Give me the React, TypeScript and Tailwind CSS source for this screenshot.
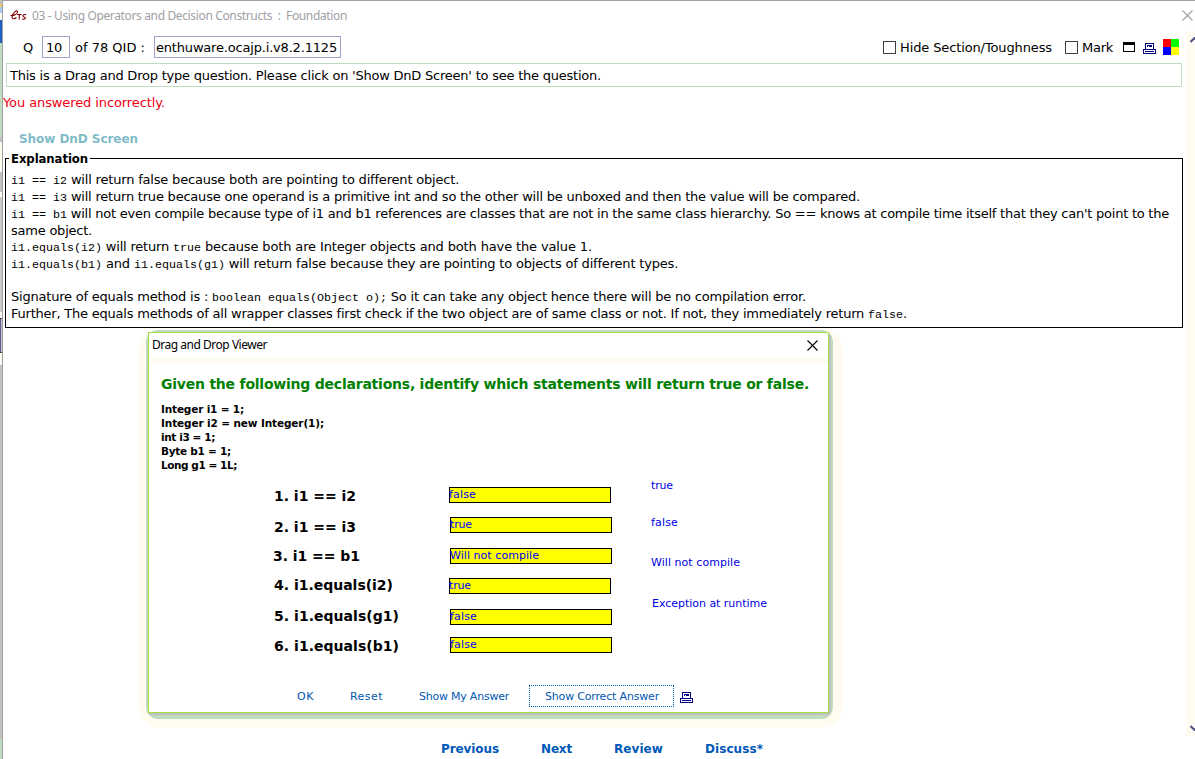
import { useLayoutEffect, useRef, type ReactNode } from "react";

// Spreads or tightens the letters of a label so that it fills a given width.
function Fit({ w, className = "", children }: { w: number; className?: string; children: ReactNode }) {
  const ref = useRef<HTMLSpanElement>(null);
  useLayoutEffect(() => {
    const el = ref.current;
    if (!el) return;
    el.style.letterSpacing = "0px";
    const n = (el.textContent ?? "").length;
    el.style.letterSpacing = `${(w - el.getBoundingClientRect().width) / n}px`;
  }, [w]);
  return (
    <span ref={ref} className={`inline-block shrink-0 whitespace-pre ${className}`}>
      {children}
    </span>
  );
}

function Code({ children }: { children: ReactNode }) {
  return <span className="-mb-px mt-px shrink-0 whitespace-pre font-['Liberation_Mono',monospace] text-[11.667px] tracking-normal">{children}</span>;
}

function Printer() {
  return (
    <svg width="13" height="11" viewBox="0 0 13 11" shapeRendering="crispEdges" className="shrink-0 text-[#000080]">
      <path fill="currentColor" d="M2 0h9v7h-9z M0 6h13v5h-13z" />
      <path fill="#fff" d="M3 1h7v5h-7z M1 7h11v3h-11z" />
      <path fill="currentColor" d="M4 2h5v1h-5z M4 3h1v1h-1z M6 3h3v1h-3z M2 8h9v1h-9z" />
    </svg>
  );
}

function Cross({ size, className }: { size: number; className: string }) {
  return (
    <svg width={size} height={size} viewBox="0 0 11 11" className={className}>
      <path d="M.5 .5l10 10M10.5 .5l-10 10" stroke="currentColor" strokeWidth="1.1" />
    </svg>
  );
}

const statements = [
  { text: "1. i1 == i2", w: 82, cls: "h-[31px]" },
  { text: "2. i1 == i3", w: 82, cls: "h-[29px]" },
  { text: "3. i1 == b1", w: 87, cls: "h-[29px] -ml-px" },
  { text: "4. i1.equals(i2)", w: 119, cls: "h-[31px]" },
  { text: "5. i1.equals(g1)", w: 125, cls: "h-[30px]" },
  { text: "6. i1.equals(b1)", w: 125, cls: "h-[30px]" },
];

const answers = [
  { text: "false", w: 27, cls: "mb-[14px]" },
  { text: "true", w: 22, cls: "ml-px mb-[15px]" },
  { text: "Will not compile", w: 89, cls: "ml-px mb-[14px]" },
  { text: "true", w: 22, cls: "mb-[15px]" },
  { text: "false", w: 27, cls: "ml-px mb-[12px]" },
  { text: "false", w: 27, cls: "ml-px" },
];

const options = [
  { text: "true", w: 22, cls: "h-[37px]" },
  { text: "false", w: 27, cls: "h-[40px]" },
  { text: "Will not compile", w: 89, cls: "h-[41px]" },
  { text: "Exception at runtime", w: 115, cls: "ml-px h-[20px]" },
];

function Dialog() {
  return (
    <div className="absolute left-[139px] top-[329px] h-[399px] w-[704px] rounded-[22px] bg-[#fffbf0]">
      <div className="absolute left-[7px] top-px h-[389px] w-[687px] rounded-[12px] bg-[#c0dcc0]" />
      <div className="absolute left-[9px] top-[5px] h-[381px] w-[683px] rounded-[4px] bg-[#c0c0c0]" />
      <div className="absolute left-[9px] top-[3px] flex h-[381px] w-[681px] flex-col border border-[#a0e040] bg-white">
        <div className="flex h-[25px] items-center justify-between pb-px pl-[3px] pr-[10px] font-['Noto_Sans',sans-serif] text-[12px]">
          <Fit w={115}>Drag and Drop Viewer</Fit>
          <Cross size={11} className="text-black" />
        </div>
        <div className="h-[5px] bg-[#fffbf0]" />
        <div className="flex flex-1 flex-col">
          <Fit w={648} className="ml-[12px] mt-[11px] h-[20px] self-start text-[14px] font-bold leading-[20px] text-[#008000]">
            Given the following declarations, identify which statements will return true or false.
          </Fit>
          <div className="mb-px ml-[12px] mt-[8px] flex flex-col items-start text-[10.5px] font-bold leading-[14px]">
            <Fit w={83}>Integer i1 = 1;</Fit>
            <Fit w={163}>Integer i2 = new Integer(1);</Fit>
            <Fit w={54}>int i3 = 1;</Fit>
            <Fit w={70}>Byte b1 = 1;</Fit>
            <Fit w={76}>Long g1 = 1L;</Fit>
          </div>
          <div className="flex h-[200px]">
            <div className="ml-[125px] mt-[13px] w-[175px] text-[14px] font-bold leading-[20px]">
              {statements.map((s) => (
                <div key={s.text} className={s.cls}>
                  <Fit w={s.w}>{s.text}</Fit>
                </div>
              ))}
            </div>
            <div className="mt-[14px] w-[202px] text-[11px] text-[#0000ff]">
              {answers.map((a, i) => (
                <div key={i} className={`flex h-[16px] w-[162px] items-center border border-black bg-[#ffff00] pb-px leading-[14px] ${a.cls}`}>
                  <Fit w={a.w} className="-ml-px">{a.text}</Fit>
                </div>
              ))}
            </div>
            <div className="mt-[3px] text-[11px] leading-[20px] text-[#0000e0]">
              {options.map((o) => (
                <div key={o.text} className={o.cls}>
                  <Fit w={o.w}>{o.text}</Fit>
                </div>
              ))}
            </div>
          </div>
          <div className="mt-[12px] flex h-[22px] items-center pl-[148px] text-[11px] text-[#0057b0]">
            <Fit w={17} className="mr-[36px] mt-[2px]">OK</Fit>
            <Fit w={33} className="mr-[36px] mt-[2px]">Reset</Fit>
            <Fit w={90} className="mr-[20px] mt-[2px]">Show My Answer</Fit>
            <div className="mr-[6px] flex h-[22px] w-[145px] items-center border border-dotted border-[#0058b8] pl-[15px] pt-[2px]">
              <Fit w={114}>Show Correct Answer</Fit>
            </div>
            <div className="mt-[2px]">
              <Printer />
            </div>
          </div>
        </div>
      </div>
    </div>
  );
}

export default function App() {
  return (
    <div className="relative flex h-[759px] w-[1195px] overflow-hidden bg-white font-['DejaVu_Sans',sans-serif] text-[13px] text-black">
      <div className="flex w-[2px] shrink-0 flex-col bg-[#fffbf0]">
        <div className="h-[4px] bg-[#c0c0c0]" />
        <div className="h-[3px] bg-[#f0ca60]" />
        <div className="h-[6px] bg-[#a6caf0]" />
        <div className="h-[7px]" />
        <div className="h-[23px] bg-[#2060c0]" />
        <div className="h-[94px] bg-[#c0dcc0]" />
        <div className="h-[5px] bg-[#c0c0c0]" />
        <div className="h-[30px]" />
        <div className="h-[20px] bg-[#c0c0c0]" />
        <div className="h-[5px]" />
        <div className="h-[115px] bg-[#c4ccc4]" />
        <div className="h-[6px]" />
        <div className="flex h-[35px] border-y border-[#404040] bg-[#c0c0c0]">
          <div className="w-px bg-[#606090]" />
        </div>
        <div className="h-[12px]" />
        <div className="h-[374px] bg-[#c0c0c0]" />
        <div className="flex-1 bg-[#c0dcc0]" />
      </div>
      <div className="flex min-w-0 flex-1 flex-col border-l border-t border-[#a0a0a4]">
        <div className="flex h-[30px] items-center pb-px pl-[7px] font-['Noto_Sans',sans-serif] text-[12px] text-[#a0a0a4]">
          <svg width="17" height="12" viewBox="0 0 17 12" fill="none" stroke="#800000" strokeWidth="1.1" className="mr-[5px]">
            <path d="M.5 5.500C4 6 8 3.500 7.500 1.500C7 0 4.500 1.500 3 4C1.500 7.500 2 10.500 6.500 7.500" />
            <path d="M7 4.500H11.500M9.300 4.500V9.500M16 4.600C12.500 4 12 6.500 14 7C16.500 7.500 15.500 9.800 12 9" />
          </svg>
          <Fit w={315}>03 - Using Operators and Decision Constructs  :  Foundation</Fit>
          <Cross size={11} className="ml-auto mr-[2px] text-[#a0a0a4]" />
        </div>
        <div className="flex min-h-0 flex-1">
          <div className="flex w-[1183px] shrink-0 flex-col">
            <div className="flex h-[32px] items-center pl-[20px]">
              <Fit w={10} className="mr-[9px] mt-px">Q</Fit>
              <div className="mr-[5px] flex h-[22px] w-[28px] items-center border border-[#a0a0c8] pl-[3px] pt-px">
                <Fit w={16}>10</Fit>
              </div>
              <Fit w={70} className="mr-[9px] mt-px">of 78 QID :</Fit>
              <div className="flex h-[22px] w-[187px] items-center border border-[#a0a0c8] pl-px pt-px">
                <Fit w={181}>enthuware.ocajp.i.v8.2.1125</Fit>
              </div>
              <div className="ml-auto flex items-center pr-[7px]">
                <div className="mr-[4px] size-[13px] border border-[#404040]" />
                <Fit w={152} className="mr-[13px] mt-px">Hide Section/Toughness</Fit>
                <div className="mr-[4px] size-[13px] border border-[#404040]" />
                <Fit w={31} className="mr-[10px] mt-px">Mark</Fit>
                <div className="mr-[8px] h-[10px] w-[12px] border border-t-[3px] border-black" />
                <div className="mt-[2px]"><Printer /></div>
                <div className="ml-[7px] grid size-[16px] grid-cols-2">
                  <i className="bg-[#ff0000]" />
                  <i className="bg-[#00ff00]" />
                  <i className="bg-[#0000ff]" />
                  <i className="bg-[#ffff00]" />
                </div>
              </div>
            </div>
            <div className="ml-[3px] flex h-[24px] w-[1176px] items-center border border-[#c0dcc0] pl-[3px] pt-px">
              <Fit w={591}>This is a Drag and Drop type question. Please click on 'Show DnD Screen' to see the question.</Fit>
            </div>
            <div className="flex h-[31px] items-center text-[#f00010]">
              <Fit w={162}>You answered incorrectly.</Fit>
            </div>
            <div className="mt-[11px] flex h-[20px] items-center pl-[16px] text-[12px] font-bold text-[#80bcc8]">
              <Fit w={119}>Show DnD Screen</Fit>
            </div>
            <fieldset className="ml-[2px] h-[179px] w-[1178px] border border-black pl-[5px] leading-[16.8px]">
              <legend className="-ml-[2px] h-[18px] px-[2px] font-['DejaVu_Sans_Condensed','DejaVu_Sans',sans-serif] font-bold leading-[19px]">
                <Fit w={77}>Explanation</Fit>
              </legend>
              <div className="mt-[5.2px]">
                <div className="flex"><Code>i1 == i2</Code><Fit w={392}> will return false because both are pointing to different object.</Fit></div>
                <div className="flex"><Code>i1 == i3</Code><Fit w={793}> will return true because one operand is a primitive int and so the other will be unboxed and then the value will be compared.</Fit></div>
                <div className="flex"><Code>i1 == b1</Code><Fit w={1102}> will not even compile because type of i1 and b1 references are classes that are not in the same class hierarchy. So == knows at compile time itself that they can't point to the</Fit></div>
                <div className="flex"><Fit w={81}>same object.</Fit></div>
                <div className="flex"><Code>i1.equals(i2)</Code><Fit w={71}> will return </Fit><Code>true</Code><Fit w={391}> because both are Integer objects and both have the value 1.</Fit></div>
                <div className="flex"><Code>i1.equals(b1)</Code><Fit w={32}> and </Fit><Code>i1.equals(g1)</Code><Fit w={453}> will return false because they are pointing to objects of different types.</Fit></div>
                <div className="h-[16px]" />
                <div className="flex"><Fit w={201}>Signature of equals method is : </Fit><Code>boolean equals(Object o);</Code><Fit w={419}> So it can take any object hence there will be no compilation error.</Fit></div>
                <div className="flex"><Fit w={857}>Further, The equals methods of all wrapper classes first check if the two object are of same class or not. If not, they immediately return </Fit><Code>false</Code><Fit w={4}>.</Fit></div>
              </div>
            </fieldset>
            <div className="-mb-px mt-auto flex h-[22px] items-center pl-[438px] text-[12px] font-bold text-[#0058b8]">
              <Fit w={58} className="mr-[42px]">Previous</Fit>
              <Fit w={31} className="mr-[42px]">Next</Fit>
              <Fit w={49} className="mr-[42px]">Review</Fit>
              <Fit w={58}>Discuss*</Fit>
            </div>
          </div>
          <div className="mb-[23px] flex min-w-0 flex-1 flex-col justify-between overflow-hidden bg-[#fffbf0] pb-[5px] pl-[4px] pt-[6px] text-[#505080]">
            <svg width="9" height="6" viewBox="0 0 9 6" fill="none" stroke="currentColor" strokeWidth="2"><path d="M.5 5L4.500 1L8.500 5" /></svg>
            <svg width="9" height="6" viewBox="0 0 9 6" fill="none" stroke="currentColor" strokeWidth="2"><path d="M.5 1L4.500 5L8.500 1" /></svg>
          </div>
        </div>
      </div>
      <Dialog />
    </div>
  );
}
